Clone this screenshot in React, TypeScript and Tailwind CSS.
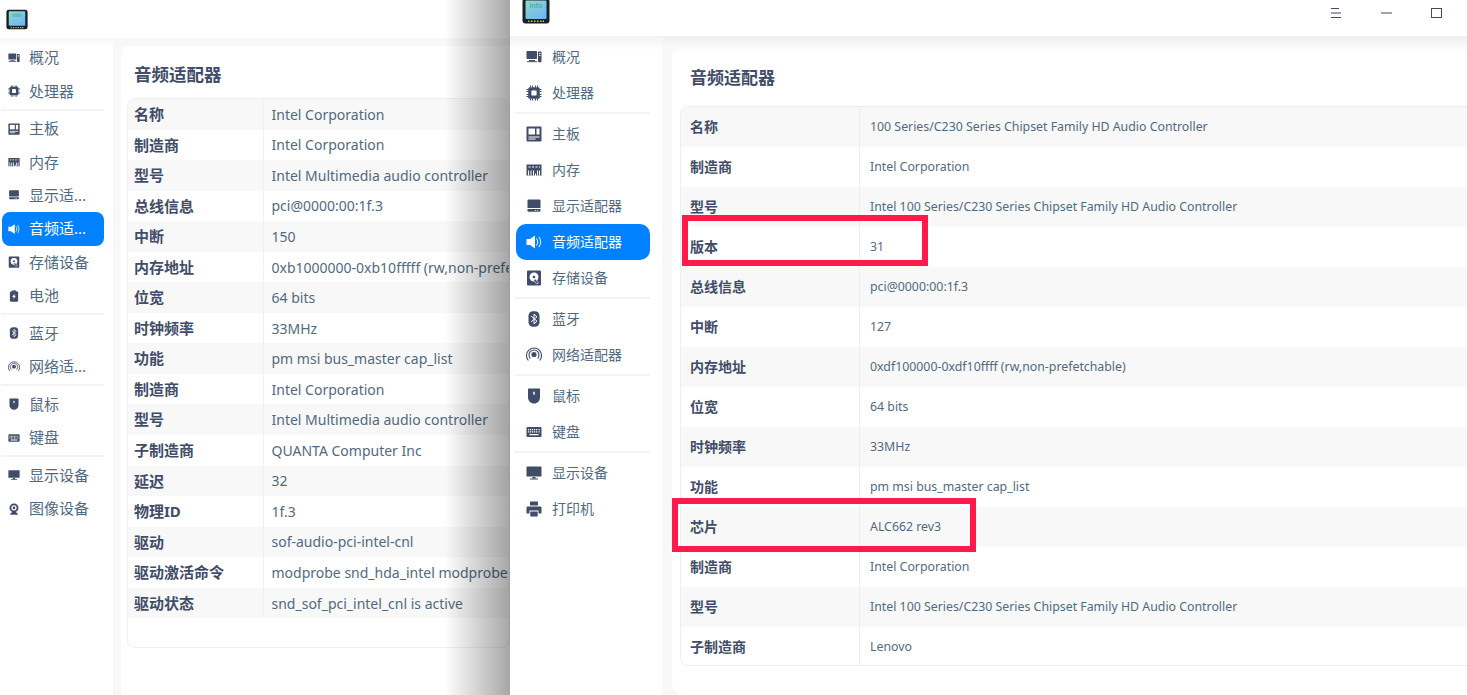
import React from "react";

const FONT = "font-['Noto_Sans','Noto_Sans_CJK_SC',sans-serif]";

function Glyph({ name, color, white }: { name: string; color: string; white: string }) {
  switch (name) {
    case "overview":
      return (<g fill={color}><rect x="0.5" y="2" width="10.5" height="8" rx="0.8" /><rect x="3" y="11" width="6" height="1.2" /><rect x="1" y="12.2" width="10" height="1" /><rect x="12" y="2.5" width="3.5" height="10.7" rx="0.6" /><rect x="13" y="4" width="1.5" height="1" fill={white} /><rect x="13" y="6" width="1.5" height="1" fill={white} /></g>);
    case "cpu":
      return (<g fill={color}><rect x="2.2" y="2.2" width="11.6" height="11.6" rx="1.5" /><rect x="5.4" y="5.4" width="5.2" height="5.2" rx="0.6" fill={white} /><path d="M4 .5h1v2H4zM6 .5h1v2H6zM9 .5h1v2H9zM11 .5h1v2h-1zM4 13.5h1v2H4zM6 13.5h1v2H6zM9 13.5h1v2H9zM11 13.5h1v2h-1zM.5 4h2v1h-2zM.5 6h2v1h-2zM.5 9h2v1h-2zM.5 11h2v1h-2zM13.5 4h2v1h-2zM13.5 6h2v1h-2zM13.5 9h2v1h-2zM13.5 11h2v1h-2z" /></g>);
    case "board":
      return (<g><rect x="0.5" y="0.5" width="15" height="15" rx="1" fill={color} /><rect x="2.5" y="2.5" width="6.5" height="6" fill={white} /><rect x="10.5" y="2.5" width="3" height="6" fill={white} /><rect x="2.5" y="10.5" width="11" height="1" fill={white} /><rect x="2.5" y="12.5" width="7" height="1" fill={white} /></g>);
    case "memory":
      return (<g><path d="M0.5 2.5h15v11h-5.5v-2h-1v2h-8.500z" fill={color} /><path d="M2.500 4.500h2v1h-2zM6 4.500h2v1H6zM9.500 4.500h2v1h-2zM13 4.500h1v1h-1z" fill={white} /><path d="M2 8.500h1v5H2zM4.500 8.500h1v5h-1zM7 8.500h1v5H7zM11 8.500h1v5h-1zM13 8.500h1v5h-1z" fill={white} /></g>);
    case "gpu":
      return (<g fill={color}><path d="M2.500 1.500h11a1 1 0 0 1 1 1v7.500h-13v-7.500a1 1 0 0 1 1-1z" /><path d="M1.500 11h13v1.800a1 1 0 0 1-1 1h-11a1 1 0 0 1-1-1z" /><rect x="9" y="12" width="1" height="0.8" fill={white} /><rect x="11" y="12" width="1" height="0.8" fill={white} /></g>);
    case "audio":
      return (<g fill="#fff"><path d="M0.500 5h3.500l5-3.500v13L4 11H0.500z" /><path d="M10.500 4.500c1.600 2 1.600 5 0 7" fill="none" stroke="#fff" strokeWidth="1" /><path d="M12.800 2.800c2.400 3 2.400 7.400 0 10.400" fill="none" stroke="#fff" strokeWidth="1" /></g>);
    case "disk":
      return (<g><rect x="1" y="0.500" width="14" height="15" rx="1" fill={color} /><circle cx="8" cy="7" r="4.500" fill={white} /><circle cx="8" cy="7" r="1.300" fill={color} /><path d="M7.500 10l3 4 2-1-3-4z" fill={color} stroke={white} strokeWidth="0.600" /></g>);
    case "battery":
      return (<g><rect x="5.500" y="0.500" width="5" height="2" fill={color} /><rect x="2.500" y="1.800" width="11" height="13.700" rx="2" fill={color} /><path d="M8.800 4.500L5.500 9.200h2.200L7.200 12.500l3.300-4.700H8.300z" fill={white} /></g>);
    case "bluetooth":
      return (<g><rect x="2.500" y="0.200" width="11" height="15.600" rx="4.500" fill={color} /><path d="M5 5l6 5.200L8 13V3l3 2.800L5 11" fill="none" stroke={white} strokeWidth="1" /></g>);
    case "network":
      return (<g fill="none" stroke={color}><circle cx="8" cy="7.500" r="2.600" fill={color} stroke="none" /><path d="M4.400 11.500a5 5 0 1 1 7.200 0" strokeWidth="1.100" /><path d="M2.400 13.500a7.500 7.500 0 1 1 11.200 0" strokeWidth="1.100" /></g>);
    case "mouse":
      return (<g><path d="M2 1.500c0-.6.400-1 1-1h10c.6 0 1 .4 1 1v8c0 3.400-2.700 6-6 6s-6-2.600-6-6z" fill={color} /><rect x="7.300" y="3.500" width="1.400" height="3.500" rx="0.700" fill={white} /></g>);
    case "keyboard":
      return (<g><rect x="0.500" y="3" width="15" height="10" rx="1" fill={color} /><path d="M2 5h1.200v1.200H2zM4 5h1.200v1.200H4zM6 5h1.200v1.200H6zM8 5h1.200v1.200H8zM10 5h1.200v1.200H10zM12.500 5h1.200v1.200h-1.200zM2 7.300h1.200v1.200H2zM4 7.300h1.200v1.200H4zM6 7.300h1.200v1.200H6zM8 7.300h1.200v1.200H8zM10 7.300h1.200v1.200H10zM12.500 7.300h1.200v1.200h-1.200zM3.500 10h9v1.200h-9z" fill={white} /></g>);
    case "monitor":
      return (<g fill={color}><path d="M1 1.500h14a.5.5 0 0 1 .5.5v9.500H.5V2a.5.5 0 0 1 .5-.5z" /><rect x="6.500" y="12" width="3" height="1.500" /><rect x="4" y="13.500" width="8" height="1" /></g>);
    case "camera":
      return (<g><circle cx="8" cy="6.500" r="6" fill={color} /><circle cx="8" cy="6.500" r="3.500" fill={white} /><circle cx="8" cy="6.500" r="1.800" fill={color} /><path d="M3 15.500h10v-1.200L10.500 12h-5L3 14.300z" fill={color} /></g>);
    case "printer":
      return (<g fill={color}><rect x="4" y="0.500" width="8" height="4" rx="0.500" /><path d="M1.500 5.500h13a1 1 0 0 1 1 1v6h-3V9.500h-9v3h-3v-6a1 1 0 0 1 1-1z" /><rect x="4.300" y="10.500" width="7.400" height="5" rx="0.500" /></g>);
    default:
      return null;
  }
}

function Icon({ name, className }: { name: string; className: string }) {
  return (
    <svg viewBox="0 0 16 16" className={className}>
      <Glyph name={name} color="#414d68" white="#ffffff" />
    </svg>
  );
}

function Logo({ className, id }: { className: string; id: string }) {
  return (
    <svg viewBox="0 0 28 26" className={className}>
      <defs>
        <linearGradient id={id} x1="0" y1="0" x2="0.800" y2="1">
          <stop offset="0" stopColor="#8fdcc4" />
          <stop offset="1" stopColor="#6cb6fa" />
        </linearGradient>
      </defs>
      <rect x="0.500" y="0.500" width="27" height="25" rx="3" fill="#1b1f22" />
      <rect x="3.500" y="2.500" width="21" height="18.500" rx="1" fill={`url(#${id})`} />
      <text x="14" y="10" textAnchor="middle" fontSize="7" fontWeight="700" fill="#55a7b0" fontFamily="Liberation Sans">info</text>
      <rect x="7" y="13" width="14" height="1" fill="#7fbfe0" />
      <rect x="7" y="16" width="10" height="1" fill="#7fbfe0" />
      <path d="M6 22.500h1.500v1.500H6zM9 22.500h1.500v1.500H9zM12 22.500h1.500v1.500H12zM15 22.500h1.500v1.500H15zM18 22.500h1.500v1.500H18zM20.500 22.500H22v1.500h-1.500z" fill="#e3b93c" />
    </svg>
  );
}

type Nav = { icon: string; label: string; sep?: boolean; active?: boolean };

const leftNav: Nav[] = [
  { icon: "overview", label: "概况" },
  { icon: "cpu", label: "处理器", sep: true },
  { icon: "board", label: "主板" },
  { icon: "memory", label: "内存" },
  { icon: "gpu", label: "显示适..." },
  { icon: "audio", label: "音频适...", active: true },
  { icon: "disk", label: "存储设备" },
  { icon: "battery", label: "电池", sep: true },
  { icon: "bluetooth", label: "蓝牙" },
  { icon: "network", label: "网络适...", sep: true },
  { icon: "mouse", label: "鼠标" },
  { icon: "keyboard", label: "键盘", sep: true },
  { icon: "monitor", label: "显示设备" },
  { icon: "camera", label: "图像设备" },
];

const rightNav: Nav[] = [
  { icon: "overview", label: "概况" },
  { icon: "cpu", label: "处理器", sep: true },
  { icon: "board", label: "主板" },
  { icon: "memory", label: "内存" },
  { icon: "gpu", label: "显示适配器" },
  { icon: "audio", label: "音频适配器", active: true },
  { icon: "disk", label: "存储设备", sep: true },
  { icon: "bluetooth", label: "蓝牙" },
  { icon: "network", label: "网络适配器", sep: true },
  { icon: "mouse", label: "鼠标" },
  { icon: "keyboard", label: "键盘", sep: true },
  { icon: "monitor", label: "显示设备" },
  { icon: "printer", label: "打印机" },
];

const leftRows: [string, string][] = [
  ["名称", "Intel Corporation"],
  ["制造商", "Intel Corporation"],
  ["型号", "Intel Multimedia audio controller"],
  ["总线信息", "pci@0000:00:1f.3"],
  ["中断", "150"],
  ["内存地址", "0xb1000000-0xb10fffff (rw,non-prefetchable)"],
  ["位宽", "64 bits"],
  ["时钟频率", "33MHz"],
  ["功能", "pm msi bus_master cap_list"],
  ["制造商", "Intel Corporation"],
  ["型号", "Intel Multimedia audio controller"],
  ["子制造商", "QUANTA Computer Inc"],
  ["延迟", "32"],
  ["物理ID", "1f.3"],
  ["驱动", "sof-audio-pci-intel-cnl"],
  ["驱动激活命令", "modprobe snd_hda_intel modprobe snd_sof_pci_intel_cnl"],
  ["驱动状态", "snd_sof_pci_intel_cnl is active"],
];

const rightRows: [string, string][] = [
  ["名称", "100 Series/C230 Series Chipset Family HD Audio Controller"],
  ["制造商", "Intel Corporation"],
  ["型号", "Intel 100 Series/C230 Series Chipset Family HD Audio Controller"],
  ["版本", "31"],
  ["总线信息", "pci@0000:00:1f.3"],
  ["中断", "127"],
  ["内存地址", "0xdf100000-0xdf10ffff (rw,non-prefetchable)"],
  ["位宽", "64 bits"],
  ["时钟频率", "33MHz"],
  ["功能", "pm msi bus_master cap_list"],
  ["芯片", "ALC662 rev3"],
  ["制造商", "Intel Corporation"],
  ["型号", "Intel 100 Series/C230 Series Chipset Family HD Audio Controller"],
  ["子制造商", "Lenovo"],
];

function LeftWindow() {
  return (
    <div className="relative flex h-full w-[510px] shrink-0 flex-col overflow-hidden bg-white">
      <header className="flex h-[38px] shrink-0 items-center pl-[6px] pt-px">
        <Logo id="logoL" className="h-[21px] w-[22px]" />
      </header>
      <div className="flex min-h-0 flex-1">
        <nav className="w-[113px] shrink-0 bg-linear-to-b from-[#f7f7f7] to-white to-[10px] pl-[2px] pr-[9px] pt-[3px]">
          {leftNav.map((n, i) => (
            <div key={i}>
              <div className={`flex h-[33.4px] items-center rounded-lg pl-[6px] ${n.active ? "bg-[#0081ff] text-white" : "text-[#526a7f]"}`}>
                <Icon name={n.icon} className="h-3 w-3 shrink-0" />
                <span className="ml-[9px] whitespace-nowrap text-[15px] leading-none">{n.label}</span>
              </div>
              {n.sep && <div className="-ml-px mb-[1.2px] mt-px h-[2px] bg-[#f3f3f3]" />}
            </div>
          ))}
        </nav>
        <main className="min-w-0 flex-1 bg-[#f8f8f8] pl-2 pt-2">
          <div className="h-full rounded-tl-lg bg-white pl-[6px] pt-[16px]">
            <h1 className="pl-[7px] text-[17.5px] font-bold leading-[24px] text-[#414d68]">音频适配器</h1>
            <div className="mt-[12px] h-[550px] overflow-hidden rounded-lg border border-[#f0f0f0]">
              {leftRows.map(([k, v], i) => (
                <div key={i} className={`flex h-[30.55px] items-center whitespace-nowrap ${i % 2 === 0 ? "bg-[#f8f8f8]" : "bg-white"}`}>
                  <div className="flex h-full w-[136px] shrink-0 items-center border-r border-[#f0f0f0] pl-[6px] text-[15px] font-bold text-[#414d68]">{k}</div>
                  <div className="pl-[7.5px] text-[14px] text-[#526a7f]">{v}</div>
                </div>
              ))}
            </div>
          </div>
        </main>
      </div>
      <div className="pointer-events-none absolute inset-y-0 right-0 w-[65px] bg-linear-to-r from-transparent to-[#00000059]" />
    </div>
  );
}

function RightWindow() {
  return (
    <div className="relative flex h-full min-w-0 flex-1 flex-col overflow-hidden bg-white">
      <header className="flex h-9 shrink-0 items-start justify-between pl-3">
        <Logo id="logoR" className="-mt-[2px] h-[26px] w-[28px]" />
        <div className="flex h-[25px] items-center pr-[6px]">
          <div className="flex w-[50px] justify-center">
            <svg viewBox="0 0 10 10" className="h-[10px] w-[10px]" fill="none" stroke="#414d68">
              <path d="M0 .5h8M0 5h10M0 9.500h10" />
            </svg>
          </div>
          <div className="flex w-[50px] justify-center">
            <svg viewBox="0 0 11 10" className="h-[10px] w-[11px]" fill="none" stroke="#414d68">
              <path d="M0 5h11" />
            </svg>
          </div>
          <div className="flex w-[50px] justify-center">
            <svg viewBox="0 0 11 10" className="h-[10px] w-[11px]" fill="none" stroke="#414d68">
              <rect x="0.500" y="0.500" width="10" height="9" />
            </svg>
          </div>
        </div>
      </header>
      <div className="flex min-h-0 flex-1">
        <nav className="w-[152px] shrink-0 bg-linear-to-b from-[#f3f3f3] to-white to-[14px] pl-[6px] pr-3 pt-[3px]">
          {rightNav.map((n, i) => (
            <div key={i}>
              <div className={`flex h-9 items-center rounded-[10px] pl-[10px] ${n.active ? "bg-[#0081ff] text-white" : "text-[#526a7f]"}`}>
                <Icon name={n.icon} className="h-4 w-4 shrink-0" />
                <span className="ml-[10px] whitespace-nowrap text-[14px] leading-none">{n.label}</span>
              </div>
              {n.sep && <div className="-ml-px mb-[2px] mt-px h-[2px] bg-[#f3f3f3]" />}
            </div>
          ))}
        </nav>
        <main className="min-w-0 flex-1 bg-linear-to-b from-[#efefef] to-[#f8f8f8] to-[10px] pl-[10px] pt-[10px]">
          <div className="h-full rounded-l-xl bg-linear-to-b from-[#fafafa] to-white to-[10px] pl-2 pt-[20px]">
            <h1 className="pl-[10px] text-[17px] font-bold leading-6 text-[#414d68]">音频适配器</h1>
            <div className="mt-[16px] -mr-4 h-[560px] overflow-hidden rounded-lg border border-[#eeeeee]">
              {rightRows.map(([k, v], i) => (
                <div key={i} className={`flex h-10 items-center whitespace-nowrap ${i % 2 === 0 ? "bg-[#f8f8f8]" : "bg-white"}`}>
                  <div className="flex h-full w-[179px] shrink-0 items-center border-r border-[#eeeeee] pb-[2px] pl-[9px] text-[14px] font-bold text-[#414d68]">{k}</div>
                  <div className="pl-[10px] text-[12.33px] text-[#526a7f]">{v}</div>
                </div>
              ))}
            </div>
          </div>
        </main>
      </div>
    </div>
  );
}

export default function App() {
  return (
    <div className={`relative flex h-[695px] w-[1467px] overflow-hidden bg-white ${FONT}`}>
      <LeftWindow />
      <RightWindow />
      <div className="pointer-events-none absolute left-[682px] top-[215px] h-[51px] w-[246px] border-[6px] border-[#ff1a4b]" />
      <div className="pointer-events-none absolute left-[672px] top-[498px] h-[54px] w-[304px] border-[6px] border-[#ff1a4b]" />
    </div>
  );
}
